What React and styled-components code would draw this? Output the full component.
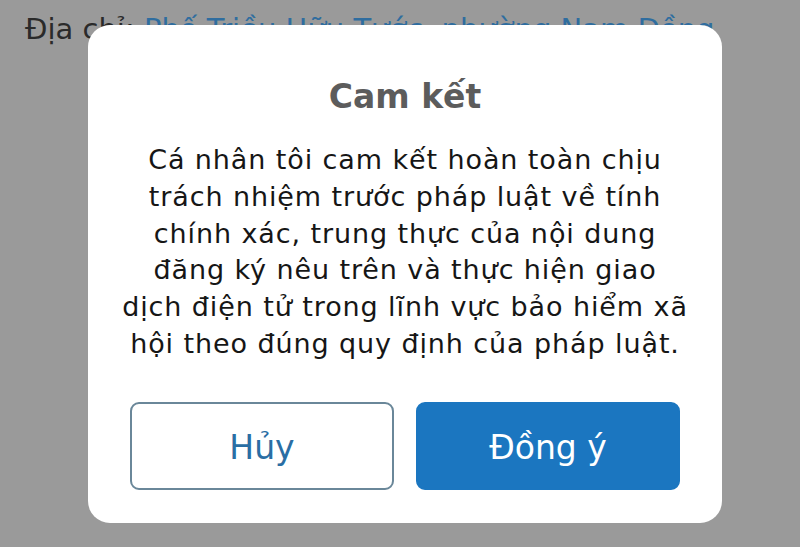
import React from 'react';
import styled, { createGlobalStyle } from 'styled-components';

const GlobalStyle = createGlobalStyle`
  html, body {
    margin: 0;
    padding: 0;
    background: #9a9a9a;
  }
  body {
    width: 800px;
    height: 547px;
    overflow: hidden;
    font-family: "DejaVu Sans", Verdana, sans-serif;
  }
`;

const Screen = styled.div`
  position: relative;
  width: 800px;
  height: 547px;
  background: #9a9a9a;
  overflow: hidden;
`;

const AddressLine = styled.div`
  padding: 12px 0 0 25px;
  font-size: 29px;
  line-height: 34px;
  color: #2a2a2a;
  white-space: nowrap;
`;

const AddressLink = styled.span`
  color: #2f6d9f;
`;

const Overlay = styled.div`
  position: absolute;
  inset: 0;
  display: flex;
  justify-content: center;
  align-items: flex-start;
  padding-top: 25px;
`;

const Dialog = styled.div`
  width: 634px;
  height: 498px;
  box-sizing: border-box;
  margin-left: 10px;
  background: #ffffff;
  border-radius: 22px;
  padding: 52px 42px 33px;
  display: flex;
  flex-direction: column;
  align-items: center;
`;

const Title = styled.h2`
  margin: 0;
  font-size: 33px;
  font-weight: 700;
  color: #5c5c5c;
  line-height: 40px;
`;

const Message = styled.p`
  margin: 25px 0 0;
  font-size: 27px;
  letter-spacing: 0.9px;
  line-height: 36.8px;
  color: #161616;
  text-align: center;
  white-space: nowrap;
`;

const Actions = styled.div`
  margin-top: auto;
  width: 100%;
  display: grid;
  grid-template-columns: 1fr 1fr;
  gap: 22px;
`;

const Button = styled.button`
  height: 88px;
  padding: 2px 0 0;
  border-radius: 9px;
  font-family: inherit;
  font-size: 33px;
  cursor: pointer;
  border: 2px solid ${p => (p.$primary ? '#1b76c0' : '#6a8799')};
  background: ${p => (p.$primary ? '#1b76c0' : '#ffffff')};
  color: ${p => (p.$primary ? '#ffffff' : '#2a6ea4')};
`;

export default function App() {
  return (
    <Screen>
      <GlobalStyle />
      <AddressLine>
        Địa chỉ: <AddressLink>Phố Triều Hữu Tước, phường Nam Đồng</AddressLink>
      </AddressLine>
      <Overlay>
        <Dialog>
          <Title>Cam kết</Title>
          <Message>
            Cá nhân tôi cam kết hoàn toàn chịu
            <br />
            trách nhiệm trước pháp luật về tính
            <br />
            chính xác, trung thực của nội dung
            <br />
            đăng ký nêu trên và thực hiện giao
            <br />
            dịch điện tử trong lĩnh vực bảo hiểm xã
            <br />
            hội theo đúng quy định của pháp luật.
          </Message>
          <Actions>
            <Button>Hủy</Button>
            <Button $primary>Đồng ý</Button>
          </Actions>
        </Dialog>
      </Overlay>
    </Screen>
  );
}
